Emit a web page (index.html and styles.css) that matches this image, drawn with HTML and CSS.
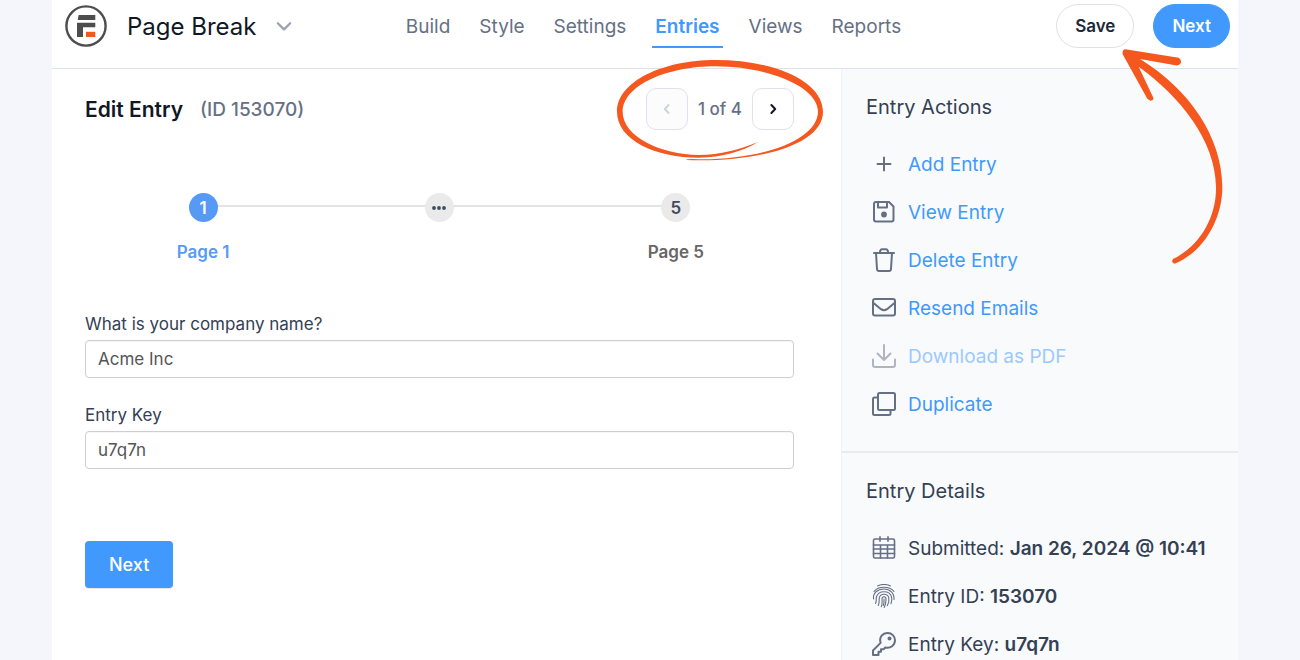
FILE: index.html
```html
<!DOCTYPE html>
<html lang="en">
<head>
  <meta charset="UTF-8">
  <meta name="viewport" content="width=device-width, initial-scale=1">
  <title>Edit Entry</title>
  <link rel="stylesheet" href="styles.css">
</head>
<body>
  <div class="panel">
    <header class="header">
      <div class="brand">
        <svg class="logo" viewBox="0 0 42 42" aria-hidden="true">
          <circle cx="21" cy="21" r="19.6" fill="none" stroke="#4d4d4d" stroke-width="2.4"/>
          <path fill="#4d4d4d" d="M13.6 10h16.7v5H12.8zM12 17.7h18.3v4.500H18V32h-6z"/>
          <path fill="#f4581f" d="M21 26.8h9.3V32H21z"/>
        </svg>
        <span class="form-name">Page Break</span>
        <button class="form-switch" aria-label="Switch form">
          <svg viewBox="0 0 16 16"><path d="M2.500 5.500 8 11l5.500-5.500"/></svg>
        </button>
      </div>
      <nav class="nav">
        <a href="#">Build</a>
        <a href="#">Style</a>
        <a href="#">Settings</a>
        <a href="#" class="active">Entries</a>
        <a href="#">Views</a>
        <a href="#">Reports</a>
      </nav>
      <div class="header-buttons">
        <div class="save-wrap">
          <button class="pill">Save</button>
          <svg class="arrow" viewBox="0 0 690 840" aria-hidden="true">
            <path d="M286 148 446 173Q456 180 452 190Q448 198 436 196L330 177C480 270 575 410 577 560C577 660 520 756 434 791Q422 788 429 777C510 738 560 650 558 560C556 420 450 290 326 200L370 293Q372 302 361 302L352 296 278 163Q276 149 286 148Z"/>
          </svg>
        </div>
        <button class="pill pill-primary">Next</button>
      </div>
    </header>

    <div class="content">
      <main class="main">
        <div class="title-row">
          <h1>Edit Entry</h1>
          <span class="entry-id">(ID 153070)</span>
          <div class="pager">
            <button class="pager-btn" aria-label="Previous entry" disabled>
              <svg viewBox="0 0 12 12"><path d="M7.6 2 3.8 6l3.8 4"/></svg>
            </button>
            <span>1 of 4</span>
            <button class="pager-btn" aria-label="Next entry">
              <svg viewBox="0 0 12 12"><path d="M4.4 2 8.2 6 4.4 10"/></svg>
            </button>
            <svg class="ring" viewBox="0 0 720 345" aria-hidden="true">
              <path d="M262 330C460 338 672 290 672 185C670 90 520 30 350 30C190 30 54 95 54 185C54 270 170 323 300 323C370 322 430 305 477 276C420 299 365 314 300 315C185 313 71 260 71 185C73 105 205 49 350 49C510 50 657 110 657 185C655 270 490 330 300 328Q262 326 262 330Z"/>
            </svg>
          </div>
        </div>

        <ol class="steps">
          <li class="current"><span class="dot">1</span><span>Page 1</span></li>
          <li>
            <span class="dot">
              <svg viewBox="0 0 16 6"><circle cx="3" cy="3" r="1.9"/><circle cx="8" cy="3" r="1.9"/><circle cx="13" cy="3" r="1.9"/></svg>
            </span>
          </li>
          <li><span class="dot">5</span><span>Page 5</span></li>
        </ol>

        <form class="entry-form">
          <div class="field">
            <label for="company">What is your company name?</label>
            <input type="text" id="company" value="Acme Inc">
          </div>
          <div class="field">
            <label for="entry-key">Entry Key</label>
            <input type="text" id="entry-key" value="u7q7n">
          </div>
          <button type="button" class="submit">Next</button>
        </form>
      </main>

      <aside class="sidebar">
        <section>
          <h2>Entry Actions</h2>
          <ul class="list">
            <li>
              <svg viewBox="0 0 24 24"><path d="M12 5.500v13M5.500 12h13"/></svg>
              <a href="#">Add Entry</a>
            </li>
            <li>
              <svg viewBox="0 0 24 24"><path d="M4 2h13l4.500 4.500v13a2 2 0 0 1-2 2H4a2 2 0 0 1-2-2V4a2 2 0 0 1 2-2zM6 2v5.500h9V2"/><circle class="solid" cx="12" cy="14.500" r="2.900"/></svg>
              <a href="#">View Entry</a>
            </li>
            <li>
              <svg viewBox="0 0 24 24"><path d="M2 5h20M8 5V3.500Q8.500 1.200 10 1.200h4q1.500 0 2 2.300V5M4 5l1 16a2 2 0 0 0 2 1.900h10a2 2 0 0 0 2-1.900L20 5"/></svg>
              <a href="#">Delete Entry</a>
            </li>
            <li>
              <svg viewBox="0 0 24 24"><rect x="1" y="3" width="22" height="16.500" rx="2"/><path d="m1.500 7 7.500 6.200q3 2 6 0L22.500 7"/></svg>
              <a href="#">Resend Emails</a>
            </li>
            <li class="disabled">
              <svg viewBox="0 0 24 24"><path d="M12 1v15M5.500 9.500 12 16l6.500-6.500M1 15.500V21a2 2 0 0 0 2 2h18a2 2 0 0 0 2-2v-5.500"/></svg>
              <a href="#" aria-disabled="true">Download as PDF</a>
            </li>
            <li>
              <svg viewBox="0 0 24 24"><rect x="6" y="1" width="17" height="17" rx="1.500"/><path d="M6 5.500H2.500A1.500 1.500 0 0 0 1 7v14.500A1.500 1.500 0 0 0 2.500 23H17a1.500 1.500 0 0 0 1.500-1.500V18"/></svg>
              <a href="#">Duplicate</a>
            </li>
          </ul>
        </section>
        <section>
          <h2>Entry Details</h2>
          <ul class="list">
            <li>
              <svg class="thin" viewBox="0 0 24 24"><rect x="1.500" y="3" width="21" height="19" rx="1.500"/><path d="M1.500 9h21M1.500 13h21M1.500 17.500h21M8.500 9v13M15.500 9v13M8 .8v4.500M16 .8v4.500"/></svg>
              <span>Submitted: <b>Jan 26, 2024 @ 10:41</b></span>
            </li>
            <li>
              <svg class="print" viewBox="0 0 24 24">
                <path d="M5.500 1.900Q12-1 18.500 1.900M2 7.500C6.500 1.800 17.500 1.800 22 7.500"/>
                <path d="M1.600 15C.6 9 5.500 5 12 5c6 0 10.500 4 10 10.500"/>
                <path d="M3.600 19.500C4.800 17 3.800 15.500 4.400 13c1.800-7 13.500-7 15.200 0 .5 2.200.2 4.500-.6 6.800"/>
                <path d="M6.300 21.500c1.500-3 .6-5.500 1-7.800 1-4.700 8.400-4.700 9.500 0 .4 2.800-.1 5.600-1.500 8"/>
                <path d="M9.200 22.800c1.200-2.600 1-5.400.8-7.600-.2-3.200 4-3.200 4 0 .1 3-.4 5.300-1.800 8.200M12 15c.2 2.800-.1 4.800-.8 6.500"/>
              </svg>
              <span>Entry ID: <b>153070</b></span>
            </li>
            <li>
              <svg viewBox="0 0 24 24"><path d="M1 23v-4.500l7.600-7.600C6.800 5 11 1 15.700 1A7.300 7.300 0 0 1 23 8.300c0 4.900-4.500 8.500-9.700 7.200l-1.800 1.800H9v2.500H6.500V23z"/><circle class="solid" cx="17.500" cy="6.500" r="2"/></svg>
              <span>Entry Key: <b>u7q7n</b></span>
            </li>
          </ul>
        </section>
      </aside>
    </div>
  </div>
</body>
</html>
```
FILE: styles.css
```css
* {
  box-sizing: border-box;
}

body {
  margin: 0;
  background-color: #f5f6fc;
  font-family: Inter, "Liberation Sans", sans-serif;
  font-size: 16px;
  color: #344054;
}

a {
  color: inherit;
  text-decoration: none;
}

button {
  font-family: inherit;
  cursor: pointer;
}

svg {
  display: block;
  fill: none;
  stroke: currentColor;
  stroke-width: 2;
  stroke-linecap: round;
  stroke-linejoin: round;
}

h1, h2, ul, ol {
  margin: 0;
  padding: 0;
}

ul, ol {
  list-style: none;
}

.panel {
  display: flex;
  flex-direction: column;
  min-height: 100vh;
  margin: 0 62px 0 52px;
  background-color: #fff;
}

/* header */
.header {
  display: grid;
  grid-template-columns: 1fr auto 1fr;
  align-items: center;
  padding: 4px 8px 20px 13px;
  border-bottom: 1px solid #dfe2ea;
}

.brand {
  display: flex;
  align-items: center;
}

.logo {
  width: 42px;
  height: 42px;
  stroke: none;
}

.form-name {
  margin-left: 20px;
  font-size: 24px;
  color: #101828;
}

.form-switch {
  margin-left: 19px;
  padding: 0;
  border: none;
  background: none;
  color: #98a2b3;
}

.form-switch svg {
  width: 18px;
  height: 18px;
}

.nav {
  display: flex;
  gap: 23px;
  margin-left: 12px;
  font-size: 19px;
  line-height: 24px;
  color: #667085;
}

.nav a {
  padding: 11px 3px 7px;
  border-bottom: 2px solid transparent;
}

.nav .active {
  border-color: #4199fd;
  color: #4199fd;
  font-weight: 600;
}

.header-buttons {
  display: flex;
  justify-content: flex-end;
  gap: 19px;
}

.pill {
  height: 44px;
  padding: 0 18px;
  border: 1px solid #dfe2ea;
  border-radius: 22px;
  background-color: #fff;
  color: #1d2939;
  font-size: 17px;
  font-weight: 600;
}

.pill-primary {
  border-color: #4199fd;
  background-color: #4199fd;
  color: #fff;
}

/* hand drawn marks */
.save-wrap,
.pager {
  position: relative;
}

.arrow,
.ring {
  position: absolute;
  z-index: 1;
  fill: #f4581f;
  stroke: none;
  pointer-events: none;
}

.arrow {
  top: -4px;
  left: -26px;
  width: 230px;
  height: 280px;
}

.ring {
  top: -38px;
  left: -47px;
  width: 240px;
  height: 115px;
}

/* entry */
.content {
  display: flex;
  flex: 1;
}

.main {
  flex: 1;
  padding: 19px 47px 0 33px;
}

.title-row {
  display: flex;
  align-items: center;
}

h1 {
  font-size: 21px;
  font-weight: 600;
  color: #101828;
}

.entry-id {
  margin-left: 17px;
  font-size: 19px;
  font-weight: 500;
  color: #667085;
}

.pager {
  display: flex;
  align-items: center;
  gap: 10px;
  margin-left: auto;
  font-size: 17px;
  font-weight: 500;
  color: #667085;
}

.pager-btn {
  display: flex;
  align-items: center;
  justify-content: center;
  width: 42px;
  height: 42px;
  padding: 0;
  border: 1px solid #dfe2ea;
  border-radius: 10px;
  background-color: #fff;
  color: #101828;
}

.pager-btn:disabled {
  background-color: #fcfcfd;
  color: #cfd3db;
}

.pager-btn svg {
  width: 12px;
  height: 12px;
}

.steps {
  display: grid;
  grid-template-columns: repeat(3, 1fr);
  margin-top: 63px;
  font-size: 17px;
  font-weight: 600;
  line-height: 20px;
  color: #666;
}

.steps li {
  position: relative;
  display: flex;
  flex-direction: column;
  align-items: center;
  gap: 20px;
}

.steps li + li::before {
  content: "";
  position: absolute;
  top: 12px;
  right: 50%;
  width: 100%;
  height: 2px;
  background-color: #e3e3e3;
}

.dot {
  position: relative;
  z-index: 1;
  display: flex;
  align-items: center;
  justify-content: center;
  width: 29px;
  height: 29px;
  border-radius: 50%;
  background-color: #eaeaea;
  color: #3f4b5f;
}

.dot svg {
  width: 16px;
  height: 6px;
  fill: currentColor;
  stroke: none;
}

.current {
  color: #579af6;
}

.current .dot {
  background-color: #579af6;
  color: #fff;
}

.entry-form {
  margin-top: 52px;
}

.field {
  margin-bottom: 27px;
}

.field label {
  display: block;
  margin-bottom: 6px;
  font-size: 17px;
  line-height: 20px;
}

.field input {
  display: block;
  width: 100%;
  height: 38px;
  padding: 0 12px;
  border: 1px solid #cdced6;
  border-radius: 4px;
  box-shadow: 0 1px 1px rgba(0, 0, 0, 0.04) inset;
  background-color: #fff;
  color: #555;
  font-family: inherit;
  font-size: 17px;
}

.submit {
  height: 47px;
  margin-top: 45px;
  padding: 0 24px;
  border: none;
  border-radius: 4px;
  box-shadow: 0 1px 1px rgba(0, 0, 0, 0.1);
  background-color: #4199fd;
  color: #fff;
  font-size: 18px;
  font-weight: 500;
}

/* sidebar */
.sidebar {
  width: 397px;
  border-left: 1px solid #f0f1f5;
  background-color: #f9fafc;
}

.sidebar section {
  padding: 26px 24px 0;
}

.sidebar section + section {
  margin-top: 33px;
  border-top: 2px solid #e8eaee;
}

h2 {
  font-size: 20px;
  font-weight: 400;
  line-height: 24px;
}

.list {
  display: flex;
  flex-direction: column;
  gap: 22px;
  margin-top: 33px;
  padding-left: 6px;
  font-size: 19px;
  line-height: 26px;
}

.list li {
  display: flex;
  gap: 12px;
}

.list svg {
  width: 24px;
  height: 24px;
  color: #667085;
}

.list .thin {
  stroke-width: 1.6;
}

.list .print {
  stroke-width: 1.1;
}

.list .solid {
  fill: currentColor;
  stroke: none;
}

.list a {
  color: #4199fd;
}

.list b {
  font-weight: 600;
}

.disabled {
  opacity: 0.5;
}
```
